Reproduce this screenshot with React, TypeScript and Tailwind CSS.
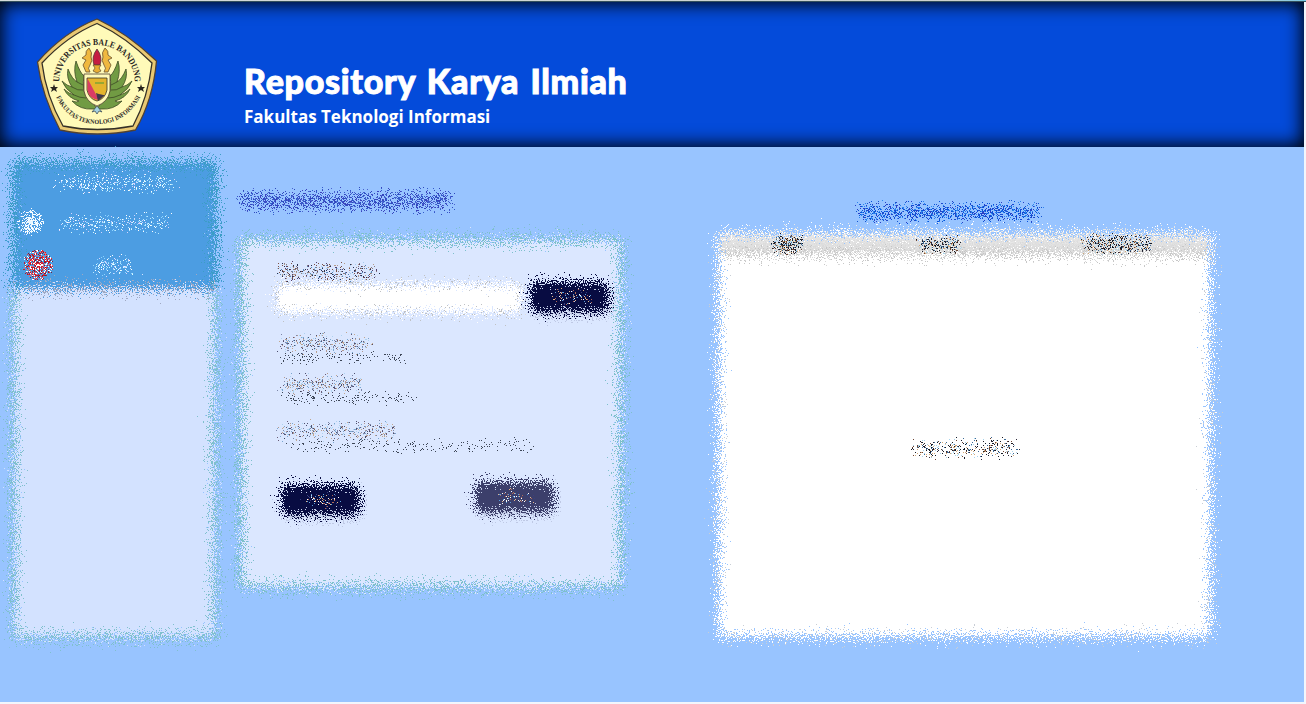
import React from "react";

type SpeckProps = {
  w: number;
  h: number;
  n: number;
  seed: number;
  colors: string[];
  className?: string;
  round?: boolean;
};

function random(seed: number) {
  let a = (seed * 0x9e3779b1) | 0;
  return () => {
    a = (a + 0x6d2b79f5) | 0;
    let t = Math.imul(a ^ (a >>> 15), 1 | a);
    t = (t + Math.imul(t ^ (t >>> 7), 61 | t)) ^ t;
    return ((t ^ (t >>> 14)) >>> 0) / 4294967296;
  };
}

/* A cloud of single-pixel dots, densest along its middle line. */
function Specks({ w, h, n, seed, colors, className = "", round = false }: SpeckProps) {
  const rnd = random(seed);
  const paths = colors.map(() => "");
  for (let i = 0; i < n; i++) {
    let x = rnd() * (w - 14) + (rnd() + rnd()) * 7;
    let y = ((rnd() + rnd() + rnd()) / 3) * (h + 4) - 2;
    if (round) {
      const r = Math.pow(rnd(), 0.8) * (0.8 + rnd() * 0.2);
      const t = rnd() * Math.PI * 2;
      x = w / 2 + (Math.cos(t) * r * w) / 2;
      y = h / 2 + (Math.sin(t) * r * h) / 2;
    }
    const k = Math.floor(rnd() * colors.length);
    paths[k] += `M${Math.floor(x)} ${Math.floor(y)}h1v1h-1z`;
  }
  return (
    <svg width={w} height={h} className={`block shrink-0 ${className}`} shapeRendering="crispEdges" aria-hidden="true">
      {paths.map((d, i) => (
        <path key={i} d={d} fill={colors[i]} />
      ))}
    </svg>
  );
}

const pale = ["#ffffff", "#ddfbff", "#b8e8ff", "#d6d3ff", "#8fd4ff"];
const ink = ["#26304f", "#7b5146", "#b49a8a", "#5687b8", "#54406c", "#a9cdec", "#8a7d80"];
const soft = ["#7c86a8", "#b49a90", "#6a5c78", "#7aa6cf", "#c2a78e", "#4d4f6e", "#aed3ef"];
const dark = ["#3d4657"];
const spark = ["#ffffff", "#b06a5a", "#5aa0dc", "#e3b48a", "#3a3f80"];
const bold = ["#1c1c24", "#2f2a3a", "#6d4433", "#d2a878", "#3c6a96", "#111a28", "#a8d4ec"];

function Filters() {
  return (
    <svg width="0" height="0" className="absolute" aria-hidden="true">
      <filter id="scatter" x="-20%" y="-20%" width="140%" height="140%" colorInterpolationFilters="sRGB">
        <feTurbulence type="fractalNoise" baseFrequency="0.83" numOctaves={3} seed={4} result="n" />
        <feDisplacementMap in="SourceGraphic" in2="n" scale={40} xChannelSelector="R" yChannelSelector="G" />
      </filter>
      <filter id="scatterSmall" x="-30%" y="-60%" width="160%" height="220%" colorInterpolationFilters="sRGB">
        <feTurbulence type="fractalNoise" baseFrequency="0.79" numOctaves={3} seed={9} result="n" />
        <feDisplacementMap in="SourceGraphic" in2="n" scale={34} xChannelSelector="R" yChannelSelector="G" />
      </filter>
    </svg>
  );
}

function Wing() {
  return (
    <g fill="#719b43" stroke="#3c4a25" strokeWidth=".8">
      <path d="M57 91 Q44 92 36 83 Q41 85 43 83 Q32 80 28 71 Q33 76 38 77 Q29 71 26 63 Q31 68 36 69 Q30 60 32 51 Q36 61 41 64 Q37 53 40 43 Q44 55 48 58 Q46 70 50 78 L57 85 L61 91Z" />
      <path d="M38 77 Q44 80 50 80 M36 69 Q42 73 47 72 M41 64 L47 67" fill="none" />
    </g>
  );
}

function Logo() {
  return (
    <svg width="122" height="120" viewBox="0 0 122 120" className="block">
      <path d="M61 1 Q91 15 120.500 43 Q117 82 99.500 112 Q61 120 24 112 Q6 78 1.500 44 Q28 14 61 1Z" fill="#e9c973" stroke="#504133" strokeWidth="1.300" />
      <path d="M61 5.500 Q90 19 116 45 Q112 80 97 108 Q61 115 27 108 Q10 78 6 45 Q31 18 61 5.500Z" fill="#fffab9" stroke="#353027" strokeWidth="1.300" />
      <defs>
        <path id="arcTop" d="M23 66 C24 14 98 14 99 66" transform="translate(0 0)" />
        <path id="arcLow" d="M18 74 Q31 106 61 106 Q92 106 107 74" />
      </defs>
      <text fontFamily="Liberation Serif, serif" fontWeight="700" fontSize="9" fill="#29251f">
        <textPath href="#arcTop" startOffset="50%" textAnchor="middle" textLength="118" lengthAdjust="spacingAndGlyphs">
          UNIVERSITAS BALE BANDUNG
        </textPath>
      </text>
      <text fontFamily="Liberation Serif, serif" fontWeight="700" fontSize="6.500" fill="#29251f">
        <textPath href="#arcLow" startOffset="50%" textAnchor="middle" textLength="106" lengthAdjust="spacingAndGlyphs">
          FAKULTAS TEKNOLOGI INFORMASI
        </textPath>
      </text>
      <path d="M18 66l1 3h3l-2 2 1 3-3-2-3 2 1-3-2-2h3z" fill="#29251f" />
      <path d="M105 66l1 3h3l-2 2 1 3-3-2-3 2 1-3-2-2h3z" fill="#29251f" />
      <Wing />
      <g transform="translate(122 0) scale(-1 1)">
        <Wing />
      </g>
      <path d="M56 94l5-6 5 6-3-1-2 3-2-3z" fill="#a5d2e2" stroke="#34444d" strokeWidth=".7" />
      <path d="M48 56H74V73Q72 84 61 88Q50 84 48 73Z" fill="#fffab9" stroke="#504133" strokeWidth=".8" />
      <path d="M51 60H71V72Q69 81 61 83Q53 81 51 72Z" fill="#e4b42d" stroke="#373228" strokeWidth=".8" />
      <path d="M51.500 60.500L63 82Q53 81 51.500 72Z" fill="#d93c65" />
      <path d="M60 75Q66 77 69 77L62 83Z" fill="#40374a" />
      <path d="M59 65h9" stroke="#98a733" strokeWidth="2" />
      <path d="M61 31Q67 39 64 47H58Q55 39 61 31Z" fill="#c51d42" stroke="#54333a" strokeWidth=".8" />
      <path d="M57 47h8l-2 3 2 3-4 2-4-2 2-3z" fill="#e8ad33" stroke="#5e4b2f" strokeWidth=".7" />
      <g fill="#efb83f" stroke="#6a5230" strokeWidth=".8">
        <path d="M53 30Q49 33 50 37L46 40 50 42 47 47 50 54H54Q51 50 54 47 57 42 55 39 57 35 53 30Z" />
        <path d="M69 30Q73 33 72 37L76 40 72 42 75 47 72 54H68Q71 50 68 47 65 42 67 39 65 35 69 30Z" />
      </g>
    </svg>
  );
}

function ScatterButton({ muted = false, seed }: { muted?: boolean; seed: number }) {
  return (
    <button className="relative flex h-[30px] w-[78px] items-center justify-center">
      <span className="absolute inset-x-0 top-1 h-[30px] rounded-md bg-[#7d86a8]/30 [filter:url(#scatterSmall)]" />
      <span className={`absolute -left-0.5 right-0.5 inset-y-0 rounded-md [filter:url(#scatterSmall)] ${muted ? "bg-[#3c3f6b]" : "bg-[#080c42]"}`} />
      <Specks w={48} h={18} n={95} seed={seed} colors={spark} className="relative" />
    </button>
  );
}

function Sidebar() {
  return (
    <aside className="relative h-[478px] w-[203px] shrink-0">
      <div className="absolute inset-y-0 -left-0.5 right-0 flex flex-col [filter:url(#scatter)]">
        <div className="h-[126px] rounded-t-md border-[5px] border-b-0 border-[#3c9dc6] bg-[#4c9de2]" />
        <div className="h-[3px] bg-[#9fa9c3]" />
        <div className="grow rounded-b border-4 border-t-0 border-[#7fc0cd] bg-[#d3e2ff]" />
      </div>
      <nav className="relative flex flex-col">
        <Specks w={130} h={24} n={410} seed={1} colors={pale} className="mt-[10px] ml-[37px]" />
        <div className="mt-[13px] flex items-center">
          <Specks w={28} h={29} n={330} seed={2} colors={["#ffffff", "#e8f7ff"]} round className="ml-[3px]" />
          <Specks w={116} h={24} n={340} seed={3} colors={pale} className="ml-[12px]" />
        </div>
        <div className="mt-[12px] flex items-center">
          <Specks w={32} h={32} n={680} seed={4} colors={["#e02f3c", "#ba1625", "#7a1a35", "#ff686c", "#c81f30", "#ffffff"]} round className="ml-[8px]" />
          <Specks w={48} h={23} n={150} seed={5} colors={pale} className="ml-[36px]" />
        </div>
      </nav>
    </aside>
  );
}

function FormPanel() {
  return (
    <section className="ml-[17px] w-[390px] shrink-0 pt-[25px]">
      <Specks w={224} h={28} n={1950} seed={6} colors={["#2e48bd", "#3c42bc", "#335bcb", "#4a63cf"]} className="-ml-px" />
      <div className="relative mt-[23px] ml-[7px] h-[351px] w-[382px]">
        <div className="absolute inset-y-0 -left-0.5 right-0 rounded border-4 border-[#7dc0cb] bg-[#dbe7ff] [filter:url(#scatter)]" />
        <div className="relative flex h-full flex-col pl-[33px]">
          <Specks w={110} h={22} n={440} seed={7} colors={ink} className="mt-[23px] -ml-0.5" />
          <div className="-mt-px flex">
            <div className="mt-0.5 ml-0.5 h-[29px] w-[245px] rounded border border-[#bfc1c4] bg-white [filter:url(#scatterSmall)]" />
            <div className="ml-[11px]">
              <ScatterButton seed={21} />
            </div>
          </div>
          <Specks w={102} h={24} n={390} seed={8} colors={soft} className="mt-[19px] -ml-px" />
          <Specks w={140} h={15} n={125} seed={9} colors={dark} className="-mt-[6px]" />
          <Specks w={92} h={23} n={360} seed={10} colors={soft} className="mt-[8px] ml-0.5" />
          <Specks w={145} h={16} n={145} seed={11} colors={dark} className="-mt-[6px]" />
          <Specks w={130} h={24} n={460} seed={12} colors={soft} className="mt-[13px] -ml-0.5" />
          <Specks w={260} h={17} n={230} seed={13} colors={dark} className="-mt-[6px] ml-[6px]" />
          <div className="mt-[28px] ml-[9px] flex gap-[116px]">
            <div className="pt-[3px]">
              <ScatterButton seed={22} />
            </div>
            <ScatterButton muted seed={23} />
          </div>
        </div>
      </div>
    </section>
  );
}

function TablePanel() {
  return (
    <section className="ml-[96px] w-[493px] shrink-0 pt-[38px]">
      <Specks w={192} h={24} n={1450} seed={14} colors={["#0650dc", "#1455d1", "#2940c5", "#2b84ed"]} className="ml-[133px]" />
      <div className="relative mt-[9px] h-[404px]">
        <div className="absolute inset-y-0 -left-0.5 right-0.5 flex flex-col [filter:url(#scatter)]">
          <div className="h-[22px] border-2 border-white border-b-[#c7c7c7] bg-linear-to-b from-[#e8e8e8] to-[#d8d8d8]" />
          <div className="grow border border-t-0 border-[#c9ced5] bg-white" />
        </div>
        <div className="relative flex items-center">
          <Specks w={40} h={23} n={310} seed={15} colors={bold} className="ml-[48px]" />
          <Specks w={51} h={22} n={250} seed={16} colors={bold} className="ml-[106px]" />
          <Specks w={80} h={23} n={500} seed={17} colors={bold} className="ml-[112px]" />
        </div>
        <Specks w={116} h={23} n={440} seed={18} colors={bold} className="relative mt-[181px] ml-[187px]" />
      </div>
    </section>
  );
}

export default function App() {
  return (
    <div className="h-[704px] w-[1306px] overflow-hidden bg-[#f2f6fc]">
      <Filters />
      <div className="h-px bg-linear-to-r from-[#d5dcda] via-[#c8ceca] via-95% to-[#75c8e6]" />
      <div className="h-px bg-[#34505c]" />
      <div className="h-[700px] w-[1304px] bg-[#98c4ff]">
        <header className="flex h-[145px] bg-[#044bda] pl-9 shadow-[inset_0_0_18px_2px_#000000]">
          <div className="w-[208px] shrink-0 pt-4">
            <Logo />
          </div>
          <div className="flex flex-col pt-[58px] text-white">
            <h1 className="font-['Lato'] text-[34px] leading-[42px] font-black tracking-[0.7px] [word-spacing:2.500px] whitespace-nowrap [-webkit-text-stroke:1px_white]">
              Repository Karya Ilmiah
            </h1>
            <p className="mt-0.5 font-['Open_Sans'] text-[17px] leading-[26px] font-bold whitespace-nowrap">Fakultas Teknologi Informasi</p>
          </div>
        </header>
        <main className="flex items-start pt-[14px] pl-[14px]">
          <Sidebar />
          <div className="flex pt-px">
            <FormPanel />
            <TablePanel />
          </div>
        </main>
      </div>
    </div>
  );
}
